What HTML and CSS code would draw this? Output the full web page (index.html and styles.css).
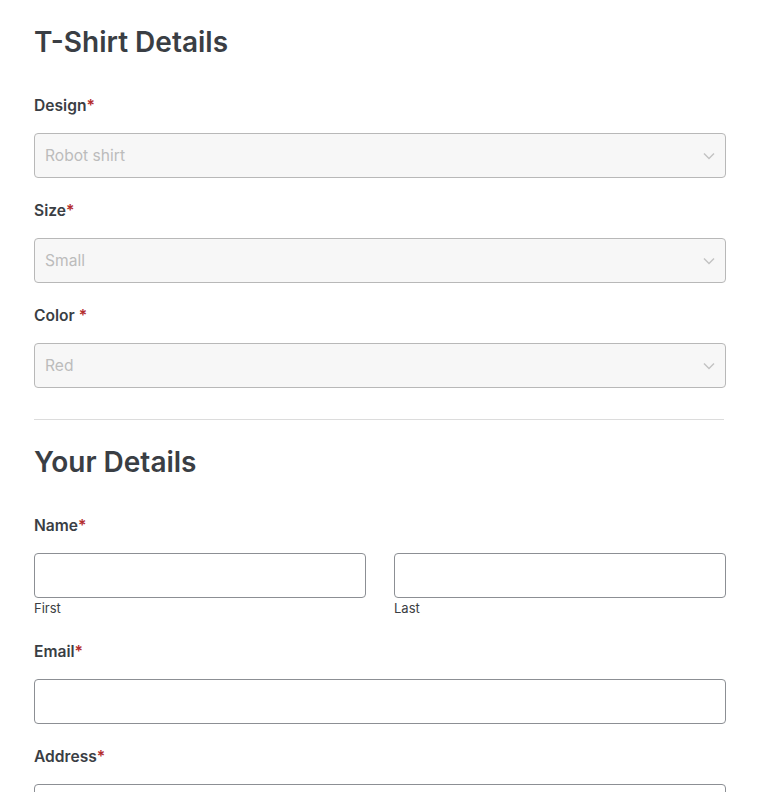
FILE: index.html
```html
<!DOCTYPE html>
<html lang="en">
<head>
<meta charset="utf-8">
<title>T-Shirt Order</title>
<link rel="stylesheet" href="styles.css">
</head>
<body>
<form class="form">
  <h2 class="heading">T-Shirt Details</h2>

  <div class="field">
    <label class="label">Design<span class="req">*</span></label>
    <div class="select">
      <span class="placeholder">Robot shirt</span>
      <svg class="chev" width="12" height="8" viewBox="0 0 12 8"><path d="M1 1.5 6 6.5 11 1.5" fill="none" stroke="currentColor" stroke-width="1.5"/></svg>
    </div>
  </div>

  <div class="field">
    <label class="label">Size<span class="req">*</span></label>
    <div class="select">
      <span class="placeholder">Small</span>
      <svg class="chev" width="12" height="8" viewBox="0 0 12 8"><path d="M1 1.5 6 6.5 11 1.5" fill="none" stroke="currentColor" stroke-width="1.5"/></svg>
    </div>
  </div>

  <div class="field">
    <label class="label">Color <span class="req">*</span></label>
    <div class="select">
      <span class="placeholder">Red</span>
      <svg class="chev" width="12" height="8" viewBox="0 0 12 8"><path d="M1 1.5 6 6.5 11 1.5" fill="none" stroke="currentColor" stroke-width="1.5"/></svg>
    </div>
  </div>

  <hr class="divider">

  <h2 class="heading">Your Details</h2>

  <div class="field field-name">
    <label class="label">Name<span class="req">*</span></label>
    <div class="name-row">
      <div class="name-col">
        <div class="input"></div>
        <span class="sub">First</span>
      </div>
      <div class="name-col">
        <div class="input"></div>
        <span class="sub">Last</span>
      </div>
    </div>
  </div>

  <div class="field field-email">
    <label class="label">Email<span class="req">*</span></label>
    <div class="input"></div>
  </div>

  <div class="field">
    <label class="label">Address<span class="req">*</span></label>
    <div class="input"></div>
  </div>
</form>
</body>
</html>
```

FILE: styles.css
```css
html, body {
  margin: 0;
  padding: 0;
  background: #ffffff;
}

body {
  font-family: Inter, "Noto Sans", "Liberation Sans", sans-serif;
  color: #3a3e44;
  overflow: hidden;
}

.form {
  width: 692px;
  padding: 25px 0 0 34px;
  display: flex;
  flex-direction: column;
}

.heading {
  margin: 0 0 36px 0;
  font-size: 28px;
  line-height: 34px;
  font-weight: 600;
  color: #3a3e44;
}

.field {
  display: flex;
  flex-direction: column;
  margin-bottom: 22px;
}

.label {
  font-size: 15.6px;
  line-height: 20px;
  padding-top: 1px;
  font-weight: 600;
  color: #3a3e44;
  margin-bottom: 17px;
}

.req {
  color: #b32d2e;
}

.select {
  box-sizing: border-box;
  height: 45px;
  border: 1px solid #b8b8b8;
  border-radius: 4px;
  background: #f7f7f7;
  display: flex;
  align-items: center;
  justify-content: space-between;
  padding: 0 10px 0 10px;
}

.placeholder {
  font-size: 15.6px;
  color: #bcbcbc;
}

.chev {
  color: #c3c3c3;
}

.divider {
  border: none;
  height: 1px;
  background: #dcdcdc;
  width: 690px;
  margin: 9px 0 25px 0;
}

.name-row {
  display: flex;
  gap: 28px;
}

.name-col {
  flex: 1;
  display: flex;
  flex-direction: column;
}

.input {
  box-sizing: border-box;
  height: 45px;
  border: 1px solid #8c8f94;
  border-radius: 4px;
  background: #ffffff;
}

.sub {
  font-size: 13px;
  line-height: 16px;
  margin-top: 2px;
  color: #3a3e44;
}

.field-name {
  margin-bottom: 25px;
}

.field-email {
  margin-bottom: 22px;
}
```
